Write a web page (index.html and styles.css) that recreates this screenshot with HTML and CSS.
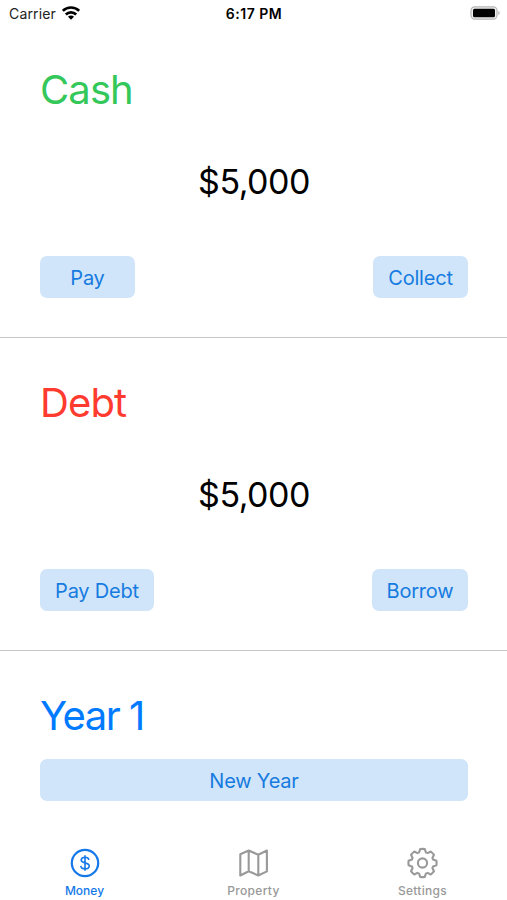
FILE: index.html
```html
<!DOCTYPE html>
<html lang="en">
<head>
<meta charset="utf-8">
<title>Money</title>
<link rel="stylesheet" href="styles.css">
</head>
<body>
<div class="app">
  <header class="status">
    <div class="carrier"><span class="carrier-name">Carrier</span>
      <svg class="wifi" viewBox="0 0 18 14" width="18" height="14" fill="none" stroke="#000" stroke-width="2.7">
        <path d="M.8 4.9a11.6 11.6 0 0 1 16.4 0M3.8 8.5a7.4 7.4 0 0 1 10.4 0"/>
        <path d="M9 13.8L6 10.8a4.2 4.2 0 0 1 6 0z" fill="#000" stroke="none"/>
      </svg>
    </div>
    <span class="time">6:17 PM</span>
    <svg class="battery" viewBox="0 0 30 14" width="30" height="14">
      <rect x="1" y=".8" width="26" height="12.4" rx="3.6" fill="#eee" stroke="#b5b5b5" stroke-width="1.2"/>
      <rect x="3" y="2.8" width="22" height="8.4" rx="1.5"/>
      <path d="M28.4 4.8c1.6.8 1.6 3.6 0 4.4z" fill="#aaa"/>
    </svg>
  </header>
  <main>
    <section class="panel">
      <h1 class="title cash"><span>Cash</span></h1>
      <p class="amount"><span>$5,000</span></p>
      <div class="actions"><button class="btn pay">Pay</button><button class="btn collect">Collect</button></div>
    </section>
    <section class="panel">
      <h1 class="title debt"><span>Debt</span></h1>
      <p class="amount"><span>$5,000</span></p>
      <div class="actions"><button class="btn pay-debt">Pay Debt</button><button class="btn borrow">Borrow</button></div>
    </section>
    <section class="panel year-panel">
      <h1 class="title year"><span>Year 1</span></h1>
      <button class="btn new-year">New Year</button>
    </section>
  </main>
  <nav class="tabs">
    <a class="tab active">
      <svg viewBox="-16 -16 32 32" width="32" height="32" fill="none" stroke="currentColor" stroke-width="2.2">
        <circle r="13.2"/>
        <path d="M3.9-3C3.6-4.9 2.1-5.7 0-5.7S-3.8-4.7-3.8-2.9C-3.8-1.1-2.2-.6 0-.1S4.2.9 4.2 2.9 2.5 5.8 0 5.8-4 4.8-4.2 2.9M0-7.7V7.8" stroke-width="1.6"/>
      </svg>
      <span>Money</span>
    </a>
    <a class="tab">
      <svg viewBox="-15.5 -16 32 32" width="32" height="32" fill="none" stroke="currentColor" stroke-width="2.1" stroke-linejoin="round">
        <path d="M-13.2-8.7L-4.8-12.5 4.8-8.2 13.4-12.5V8.4L4.8 12.5-4.8 8.2-13.2 12.5ZM-4.8-12.5V8.2M4.8-8.2V12.5"/>
      </svg>
      <span class="wide">Property</span>
    </a>
    <a class="tab">
      <svg viewBox="-15.5 -16 32 32" width="32" height="32" fill="none" stroke="currentColor" stroke-width="2.1" stroke-linejoin="round">
        <path d="M-2.3-13.9Q0-14.3 2.3-13.9L3.4-10.6 5.1-9.9 8.2-11.5Q10.1-10.1 11.5-8.2L9.9-5.1 10.6-3.4 13.9-2.3Q14.3 0 13.9 2.3L10.6 3.4 9.9 5.1 11.5 8.2Q10.1 10.1 8.2 11.5L5.1 9.9 3.4 10.6 2.3 13.9Q0 14.3-2.3 13.9L-3.4 10.6-5.1 9.9-8.2 11.5Q-10.1 10.1-11.5 8.2L-9.9 5.1-10.6 3.4-13.9 2.3Q-14.3 0-13.9-2.3L-10.6-3.4-9.9-5.1-11.5-8.2Q-10.1-10.1-8.2-11.5L-5.1-9.9-3.4-10.6Z"/>
        <circle r="4.6"/>
      </svg>
      <span class="wide">Settings</span>
    </a>
  </nav>
</div>
</body>
</html>
```
FILE: styles.css
```css
* { box-sizing: border-box; margin: 0; padding: 0; }
body { background: #fff; color: #000; font-family: Inter, "Liberation Sans", sans-serif; }
.app { width: 507px; height: 900px; display: flex; flex-direction: column; overflow: hidden; }
.status { height: 25px; padding: 0 7px 0 9px; display: grid; grid-template-columns: 1fr auto 1fr; align-items: start; font-size: 14px; line-height: 27px; }
.carrier { display: flex; gap: 6px; color: #222; }
.carrier-name { letter-spacing: 0.15px; }
.wifi { margin-top: 6px; }
.time { font-weight: 600; font-size: 14px; letter-spacing: 0.5px; margin-right: 1px; }
.battery { justify-self: end; margin-top: 6px; }
main { flex: 1; }
.panel { height: 313px; padding: 40px 39px 39px 40px; border-bottom: 1px solid #c6c6c8; display: flex; flex-direction: column; }
.title { font-size: 40px; font-weight: 400; line-height: 50px; height: 50px; letter-spacing: -0.9px; }
.cash { color: #34c759; }
.debt { color: #ff3b30; }
.year { color: #007aff; letter-spacing: -1.5px; }
.amount { font-size: 34px; line-height: 42px; margin-top: 46px; text-align: center; letter-spacing: -0.5px; }
.actions { display: flex; justify-content: space-between; margin-top: auto; }
.btn { height: 42px; border: 0; border-radius: 7px; background: #d0e5f9; color: #167be0; font: 400 20px/42px Inter, "Liberation Sans", sans-serif; letter-spacing: -0.2px; padding-top: 1px; }
.pay, .collect { width: 95px; }
.pay-debt { width: 114px; }
.borrow { width: 96px; }
.year-panel { height: auto; border: 0; padding-bottom: 0; }
.new-year { margin-top: 18px; width: 100%; }
.tabs { height: 54px; display: grid; grid-template-columns: repeat(3, 1fr); }
.tab { display: flex; flex-direction: column; align-items: center; color: #999; font-size: 12px; font-weight: 500; line-height: 16px; gap: 4px; padding-top: 1px; }
.wide { letter-spacing: 0.3px; }
.active { color: #1478e8; }
```
